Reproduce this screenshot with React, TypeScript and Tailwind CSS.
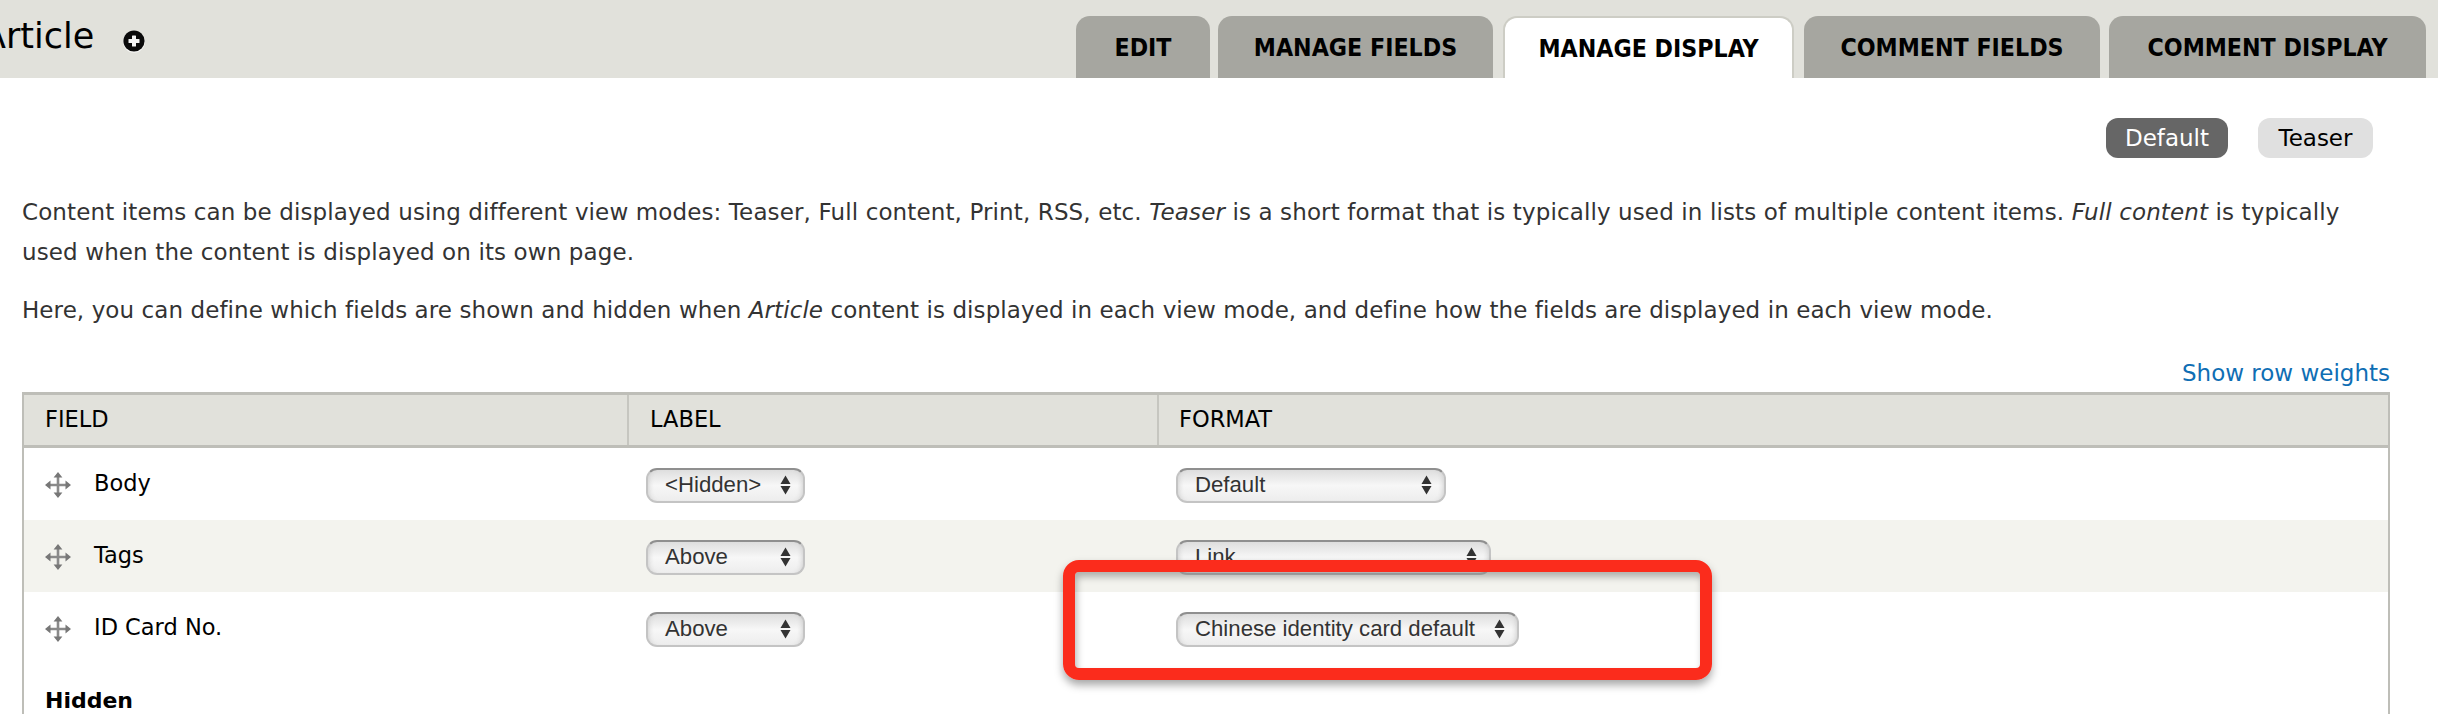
import React from "react";

function PlusIcon() {
  return (
    <svg width="24" height="24" viewBox="0 0 24 24" className="ml-[28px] mt-[18px] shrink-0">
      <circle cx="12" cy="12.8" r="11" fill="#ffffff" opacity="0.7" />
      <circle cx="12" cy="12" r="10.6" fill="#0a0a0a" />
      <rect x="6.5" y="10" width="11" height="4" rx="0.6" fill="#f4f4f4" />
      <rect x="10" y="6.5" width="4" height="11" rx="0.6" fill="#f4f4f4" />
    </svg>
  );
}

function DragIcon() {
  return (
    <svg width="26" height="26" viewBox="0 0 26 26" className="shrink-0 blur-[0.6px]">
      <path d="M13 3v20M3 13h20" stroke="#8a8a8a" strokeWidth="2.6" fill="none" />
      <path d="M13 0l4.4 5.5H8.6zM13 26l-4.4-5.5h8.8zM0 13l5.5-4.4v8.8zM26 13l-5.5 4.4V8.6z" fill="#777777" />
    </svg>
  );
}

function Arrows() {
  return (
    <svg width="11" height="20" viewBox="0 0 11 20" className="shrink-0">
      <path d="M5.5 0.5L10.5 9H0.5z" fill="#333333" />
      <path d="M5.5 19.5L0.5 11H10.5z" fill="#333333" />
    </svg>
  );
}

function Select({ text, width }: { text: string; width: string }) {
  return (
    <div
      className={`${width} h-[35px] flex items-center justify-between pl-[17px] pr-[12px] rounded-[11px] border-2 border-[#c4c4c4] border-t-[#8f8f8f] bg-gradient-to-b from-[#dedede] via-[#f7f7f7] to-[#ededed] shadow-[inset_5px_0_5px_-4px_#cfcfcf,inset_-5px_0_5px_-4px_#cfcfcf] font-['Liberation_Sans',sans-serif] text-[22.2px] leading-none text-[#333333] whitespace-pre`}
    >
      <span>{text}</span>
      <Arrows />
    </div>
  );
}

function Tab({ label, width, active }: { label: string; width: string; active?: boolean }) {
  return (
    <div
      className={
        active
          ? `${width} h-[62px] flex items-center justify-center pt-[1px] rounded-t-[14px] bg-white border-2 border-b-0 border-[#cdcdc5] font-['DejaVu_Sans_Condensed','DejaVu_Sans',sans-serif] text-[24.7px] font-bold text-black`
          : `${width} h-[62px] flex items-center justify-center pt-[2px] rounded-t-[14px] bg-[#a6a6a0] font-['DejaVu_Sans_Condensed','DejaVu_Sans',sans-serif] text-[24.7px] font-bold text-black`
      }
    >
      <span>{label}</span>
    </div>
  );
}

function Row({
  name,
  label,
  format,
  formatWidth,
  striped,
}: {
  name: string;
  label: string;
  format: string;
  formatWidth: string;
  striped?: boolean;
}) {
  return (
    <div
      className={`grid grid-cols-[603px_530px_1fr] h-[72px] items-center pt-[2px] ${striped ? "bg-[#f3f3ee]" : "bg-white"}`}
    >
      <div className="flex items-center pl-[21px] gap-[23px]">
        <DragIcon />
        <span className="text-[22.5px] text-black -mt-[3px]">{name}</span>
      </div>
      <div className="pl-[19px]">
        <Select text={label} width="w-[159px]" />
      </div>
      <div className="pl-[19px]">
        <Select text={format} width={formatWidth} />
      </div>
    </div>
  );
}

export default function App() {
  return (
    <div className="relative w-[2438px] h-[714px] overflow-hidden bg-white font-['DejaVu_Sans',sans-serif]">
      <header className="h-[78px] bg-[#e1e1db] flex items-start justify-between pr-[12px]">
        <div className="flex items-start pt-[11px] -ml-[18px]">
          <h1 className="text-[35px] leading-[50px] font-normal text-black">Article</h1>
          <PlusIcon />
        </div>
        <nav className="flex items-end h-full">
          <Tab label="EDIT" width="w-[134px]" />
          <div className="w-[8px]" />
          <Tab label="MANAGE FIELDS" width="w-[275px]" />
          <div className="w-[10px]" />
          <Tab label="MANAGE DISPLAY" width="w-[291px]" active />
          <div className="w-[10px]" />
          <Tab label="COMMENT FIELDS" width="w-[296px]" />
          <div className="w-[9px]" />
          <Tab label="COMMENT DISPLAY" width="w-[317px]" />
        </nav>
      </header>

      <main className="pl-[22px] pr-[48px]">
        <div className="flex justify-end gap-[30px] pt-[40px] pr-[17px]">
          <span className="w-[122px] h-[40px] flex items-center justify-center rounded-[12px] bg-[#666666] text-white text-[23px]">
            Default
          </span>
          <span className="w-[115px] h-[40px] flex items-center justify-center rounded-[12px] bg-[#e0e0e0] text-black text-[23px]">
            Teaser
          </span>
        </div>

        <p className="mt-[34px] text-[23px] tracking-[0.12px] leading-[40px] text-[#333333]">
          Content items can be displayed using different view modes: Teaser, Full content, Print, RSS, etc.{" "}
          <em>Teaser</em> is a short format that is typically used in lists of multiple content items.{" "}
          <em>Full content</em> is typically
          <br />
          used when the content is displayed on its own page.
        </p>
        <p className="mt-[18px] text-[23px] tracking-[0.08px] leading-[40px] text-[#333333]">
          Here, you can define which fields are shown and hidden when <em>Article</em> content is displayed in each
          view mode, and define how the fields are displayed in each view mode.
        </p>

        <div className="flex justify-end mt-[24px] h-[38px] items-center text-[23px] text-[#0f6eb4]">
          Show row weights
        </div>

        <div className="border-x-2 border-[#bebeb8] h-[400px]">
          <div className="grid grid-cols-[603px_530px_1fr] h-[56px] bg-[#e1e1db] border-y-[3px] border-[#bebeb8] text-[22.5px] text-black">
            <div className="flex items-center pl-[21px]">FIELD</div>
            <div className="flex items-center pl-[21px] border-l-2 border-[#c6c6c0]">LABEL</div>
            <div className="flex items-center pl-[20px] border-l-2 border-[#c6c6c0]">FORMAT</div>
          </div>
          <Row name="Body" label="<Hidden>" format="Default" formatWidth="w-[270px]" />
          <Row name="Tags" label="Above" format="Link" formatWidth="w-[315px]" striped />
          <Row name="ID Card No." label="Above" format="Chinese identity card default" formatWidth="w-[343px]" />
          <div className="pl-[21px] pt-[20px] text-[22px] font-bold text-black">Hidden</div>
        </div>
      </main>

      <div className="absolute left-[1063px] top-[560px] w-[649px] h-[120px] rounded-[16px] border-[12px] border-[#fb2c1c] shadow-[0_5px_8px_rgba(0,0,0,0.35),inset_2px_5px_7px_rgba(0,0,0,0.28)]" />
    </div>
  );
}
